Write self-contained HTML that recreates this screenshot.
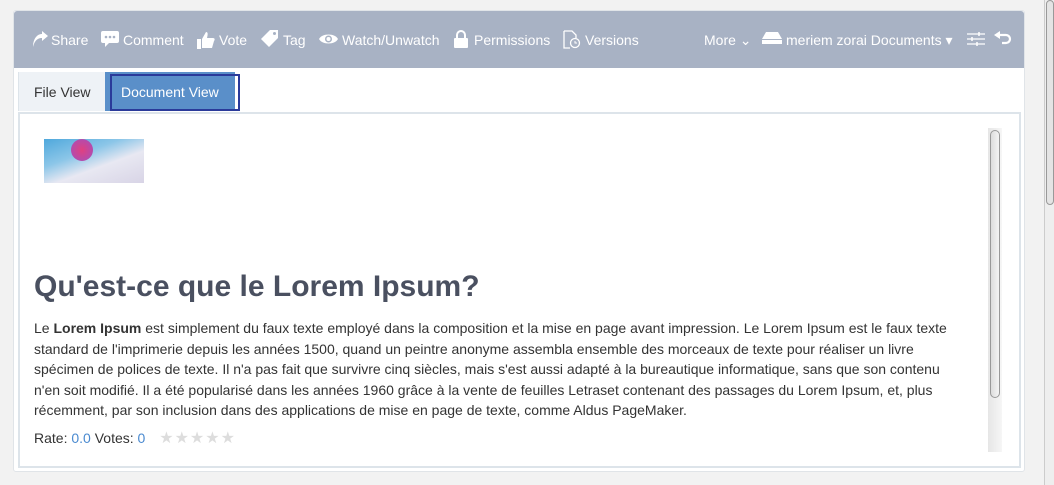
<!DOCTYPE html>
<html><head><meta charset="utf-8"><style>
*{margin:0;padding:0;box-sizing:border-box}
body{width:1054px;height:485px;background:#f2f2f2;font-family:"Liberation Sans",sans-serif;position:relative;overflow:hidden}
.panel{position:absolute;left:13px;top:10px;width:1012px;height:462px;background:#fff;border:1px solid #e0e4e8;border-radius:3px}
.hdr{position:absolute;left:0;top:0;width:1010px;height:57px;background:#a8b2c4;border-radius:3px 3px 0 0;color:#fff;font-size:14px}
.hdr span{position:absolute;top:21px;white-space:nowrap}
.hdr svg{position:absolute}
.tabs{position:absolute;left:18px;top:72px;width:1002px;height:40px}
.tabstrip{position:absolute;left:0;top:0;width:87px;height:39px;background:#eef2f6;border-left:1px solid #dde4ea}
.content{position:absolute;left:18px;top:112px;width:1003px;height:356px;border:2px solid #dde4ea;background:#fff}
p{font-size:14px;line-height:20.5px;color:#333}
</style></head><body>
<div class="panel">
<div class="hdr">
<svg style="left:17px;top:20px" width="18" height="16" viewBox="0 0 18 16"><path d="M2 16 C4 8 8 7 11 7 L11 10 L17 5 L11 0 L11 3 C6 3 2 8 2 16Z" fill="#fff"/></svg>
<span style="left:37px">Share</span>
<svg style="left:87px;top:20px" width="18" height="16" viewBox="0 0 18 16"><path d="M2 0h14a2 2 0 0 1 2 2v8a2 2 0 0 1-2 2h-8l-4 4v-4H2a2 2 0 0 1-2-2V2a2 2 0 0 1 2-2z" fill="#fff"/><circle cx="5" cy="6" r="1.3" fill="#a8b2c4"/><circle cx="9" cy="6" r="1.3" fill="#a8b2c4"/><circle cx="13" cy="6" r="1.3" fill="#a8b2c4"/></svg>
<span style="left:109px">Comment</span>
<svg style="left:183px;top:20px" width="18" height="18" viewBox="0 0 18 18"><rect x="0" y="8" width="4" height="10" fill="#fff"/><path d="M5 8 L9 1 C11 1 11 3 10 7 L16 7 C18 7 18 9 17 10 L15 17 L5 17Z" fill="#fff"/></svg>
<span style="left:205px">Vote</span>
<svg style="left:247px;top:19px" width="18" height="17" viewBox="0 0 18 17"><path d="M9 0h8v8l-9 9-8-8z" fill="#fff"/><circle cx="13.5" cy="3.5" r="1.5" fill="#a8b2c4"/></svg>
<span style="left:269px">Tag</span>
<svg style="left:305px;top:22px" width="19" height="12" viewBox="0 0 19 12"><path d="M0 6C3 0 16 0 19 6C16 12 3 12 0 6Z" fill="#fff"/><circle cx="9.5" cy="6" r="3.5" fill="#a8b2c4"/><circle cx="9.5" cy="6" r="2" fill="#fff"/></svg>
<span style="left:328px">Watch/Unwatch</span>
<svg style="left:440px;top:19px" width="14" height="18" viewBox="0 0 14 18"><path d="M3 8V5a4 4 0 0 1 8 0v3" stroke="#fff" stroke-width="2" fill="none"/><rect x="0" y="8" width="14" height="10" rx="1" fill="#fff"/></svg>
<span style="left:460px">Permissions</span>
<svg style="left:549px;top:19px" width="18" height="19" viewBox="0 0 18 19"><path d="M1 1h8l4 4v3M1 1v17h6" stroke="#fff" stroke-width="1.3" fill="none"/><circle cx="12" cy="13" r="4.5" stroke="#fff" stroke-width="1.3" fill="none"/><path d="M12 11v2h2" stroke="#fff" stroke-width="1" fill="none"/></svg>
<span style="left:571px">Versions</span>
<span style="left:690px">More ⌄</span>
<svg style="left:748px;top:21px" width="20" height="12" viewBox="0 0 20 12"><path d="M4 0h12l4 7H0z" fill="#fff"/><rect x="0" y="8" width="20" height="4" fill="#fff"/></svg>
<span style="left:772px">meriem zorai Documents ▾</span>
<svg style="left:953px;top:21px" width="18" height="14" viewBox="0 0 18 14"><path d="M0 2h18M0 7h18M0 12h18" stroke="#fff" stroke-width="1.3"/><path d="M12 0v4M5 5v4M10 10v4" stroke="#fff" stroke-width="1.5"/></svg>
<svg style="left:980px;top:20px" width="18" height="15" viewBox="0 0 18 15"><path d="M6 0 L0 4 L6 8Z" fill="#fff"/><path d="M5 4h7a4 4 0 0 1 0 8H8" stroke="#fff" stroke-width="2.2" fill="none"/></svg>
</div>
</div>
<div class="tabs">
<div class="tabstrip"></div>
<div style="position:absolute;left:16px;top:12px;font-size:14px;color:#333">File View</div>
<div style="position:absolute;left:87px;top:0;width:130px;height:39px;background:#5a8fc9"></div>
<div style="position:absolute;left:92px;top:2px;width:130px;height:37px;border:2px solid #2a3a9a"></div>
<div style="position:absolute;left:103px;top:12px;font-size:14px;color:#fff">Document View</div>
</div>
<div class="content">
<div style="position:absolute;left:24px;top:25px;width:100px;height:44px;background:linear-gradient(160deg,#4fa8dc 0%,#8cc6e8 35%,#e8e8f2 60%,#d8d4e6 100%)"><div style="position:absolute;left:27px;top:0;width:22px;height:22px;border-radius:50%;background:radial-gradient(#e04080,#a050c0)"></div></div>
<div style="position:absolute;left:14px;top:156px;font-size:30px;font-weight:bold;color:#4a5060">Qu'est-ce que le Lorem Ipsum?</div>
<div style="position:absolute;left:14px;top:204px;width:932px">
<p>Le <b>Lorem Ipsum</b> est simplement du faux texte employé dans la composition et la mise en page avant impression. Le Lorem Ipsum est le faux texte standard de l'imprimerie depuis les années 1500, quand un peintre anonyme assembla ensemble des morceaux de texte pour réaliser un livre spécimen de polices de texte. Il n'a pas fait que survivre cinq siècles, mais s'est aussi adapté à la bureautique informatique, sans que son contenu n'en soit modifié. Il a été popularisé dans les années 1960 grâce à la vente de feuilles Letraset contenant des passages du Lorem Ipsum, et, plus récemment, par son inclusion dans des applications de mise en page de texte, comme Aldus PageMaker.</p>
<p style="margin-top:7px">Rate: <span style="color:#4a8ad0">0.0</span> Votes: <span style="color:#4a8ad0">0</span> <span style="color:#ddd;font-size:16px;letter-spacing:1px;margin-left:10px">★★★★★</span></p>
</div>
<div style="position:absolute;left:968px;top:14px;width:14px;height:324px;background:linear-gradient(90deg,#e6e6e6,#f6f6f6)"><div style="position:absolute;left:2px;top:2px;width:10px;height:268px;border:1px solid #999;border-radius:5px;background:linear-gradient(90deg,#ddd,#f4f4f4)"></div></div>
</div>
<div style="position:absolute;left:1044px;top:0;width:10px;height:485px;background:#eee;border-left:1px solid #ccc"><div style="position:absolute;left:1px;top:0;width:8px;height:205px;border:1px solid #999;border-radius:4px;background:#e4e4e4"></div></div>
</body></html>
